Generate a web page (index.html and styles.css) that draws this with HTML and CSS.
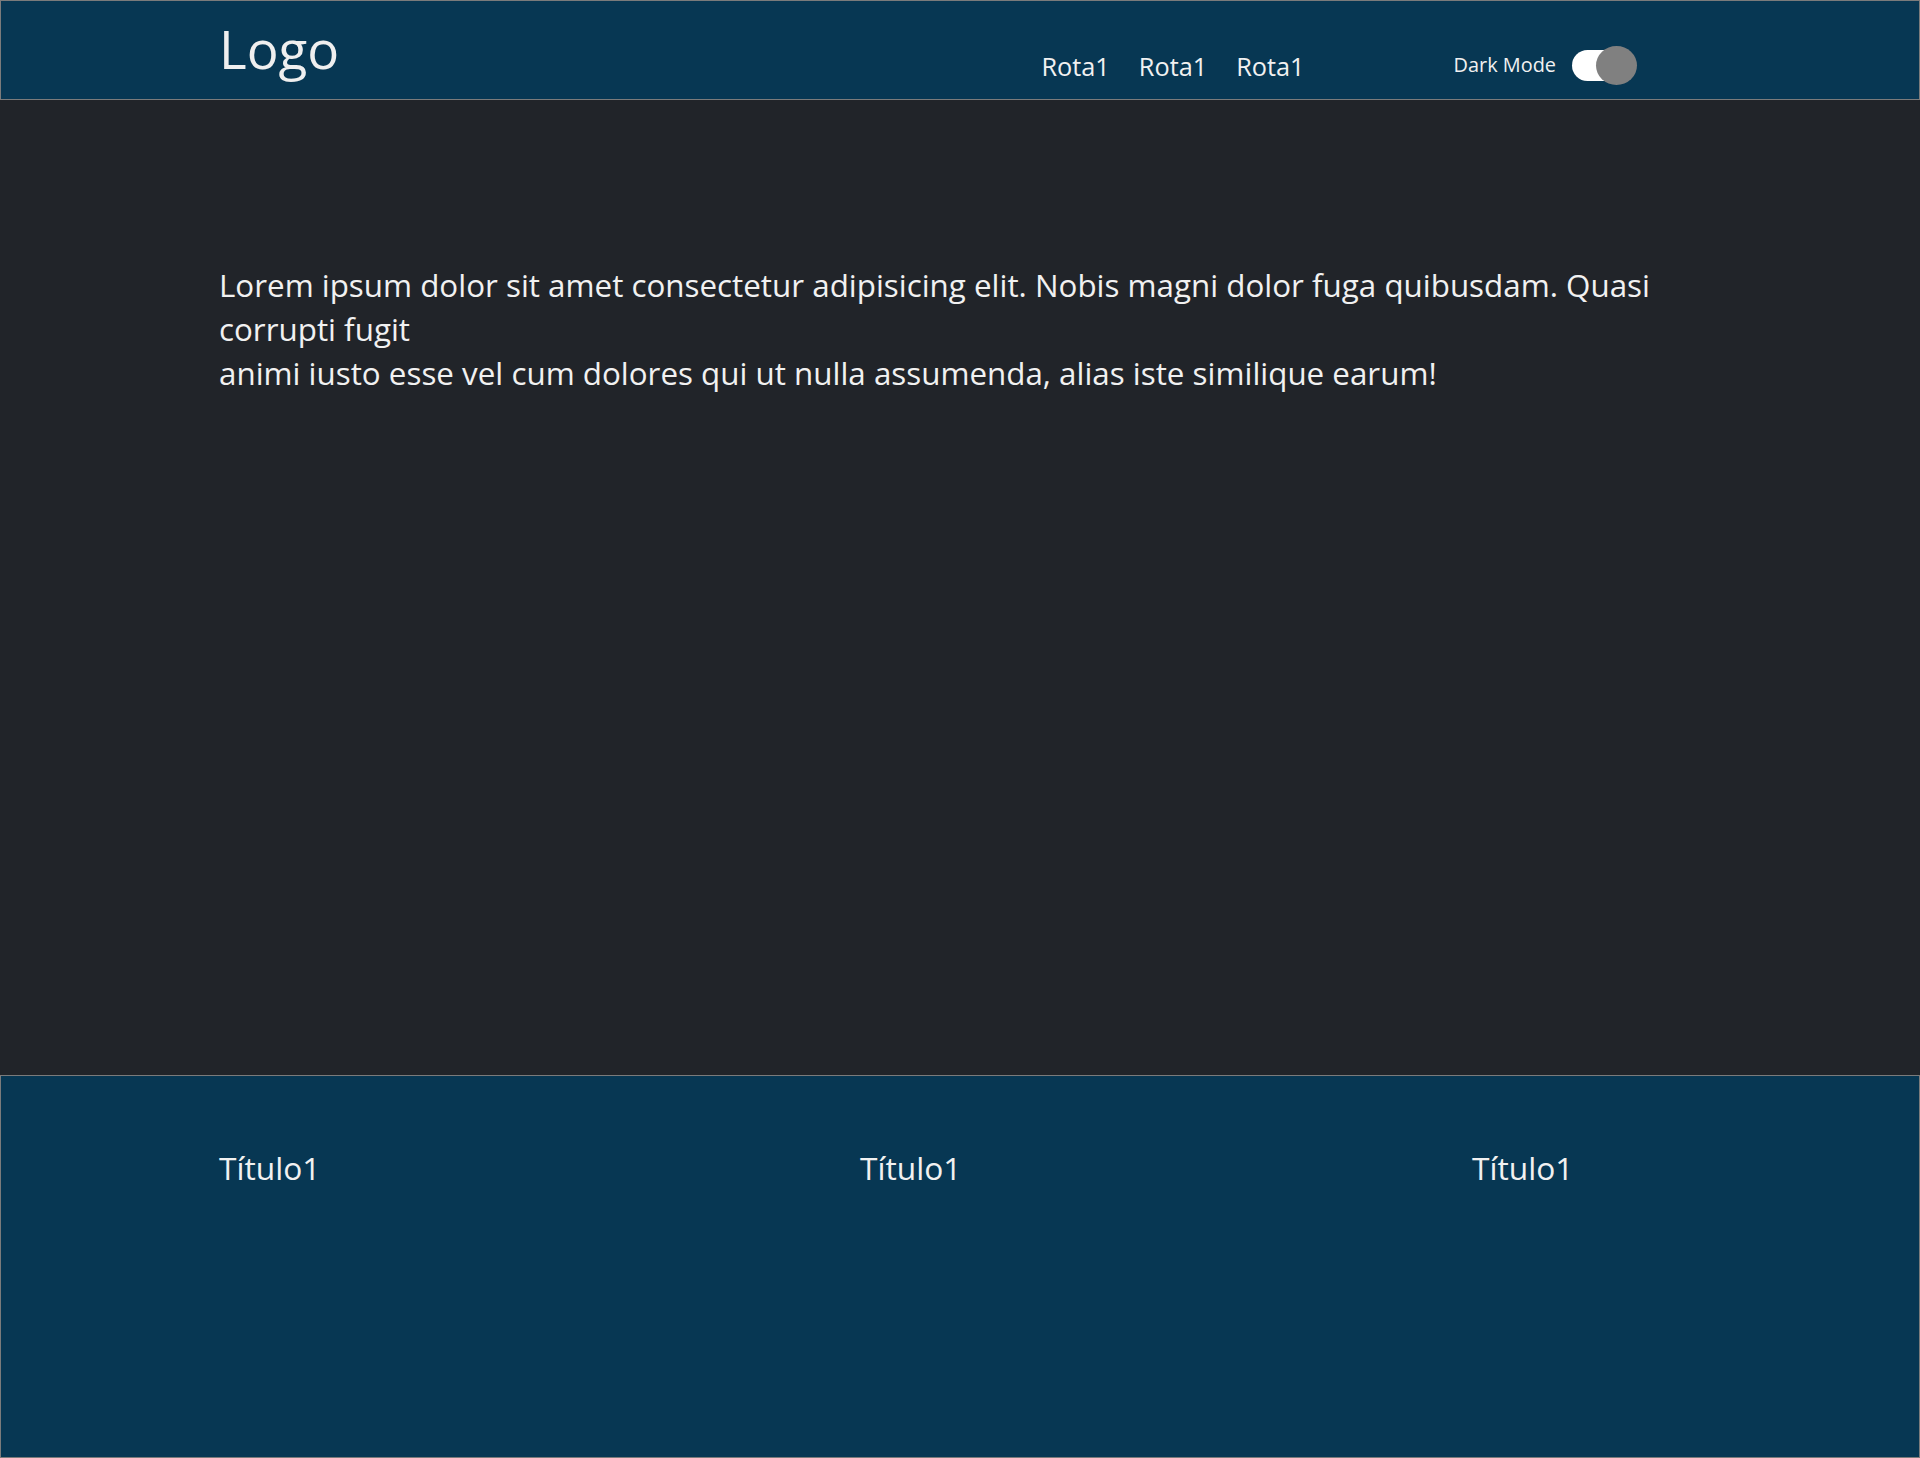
FILE: index.html
```html
<!DOCTYPE html>
<html lang="pt">
<head>
<meta charset="utf-8">
<title>Logo</title>
<link rel="stylesheet" href="styles.css">
</head>
<body>
<header class="site-header">
  <div class="header-inner">
    <div class="logo">Logo</div>
    <nav class="nav">
      <a class="nav-link" href="#">Rota1</a>
      <a class="nav-link" href="#">Rota1</a>
      <a class="nav-link" href="#">Rota1</a>
    </nav>
    <div class="theme">
      <span class="theme-label">Dark Mode</span>
      <span class="switch"><span class="switch-knob"></span></span>
    </div>
  </div>
</header>
<main class="content">
  <p class="lead">Lorem ipsum dolor sit amet consectetur adipisicing elit. Nobis magni dolor fuga quibusdam. Quasi corrupti fugit<br>animi iusto esse vel cum dolores qui ut nulla assumenda, alias iste similique earum!</p>
</main>
<footer class="site-footer">
  <div class="footer-inner">
    <div class="footer-col"><h3 class="footer-title">Título1</h3></div>
    <div class="footer-col"><h3 class="footer-title">Título1</h3></div>
    <div class="footer-col"><h3 class="footer-title">Título1</h3></div>
  </div>
</footer>
</body>
</html>
```
FILE: styles.css
```css
* { box-sizing: border-box; }
html, body { margin: 0; padding: 0; }
body {
  background: #212429;
  color: #f1f1f1;
  font-family: "Open Sans", "Liberation Sans", sans-serif;
  width: 1920px;
  min-height: 1458px;
  display: flex;
  flex-direction: column;
}
.site-header {
  height: 100px;
  background: #073753;
  border: 1px solid #7b7b7b;
}
.header-inner {
  width: 1482px;
  margin: 0 auto;
  padding-right: 64px;
  display: flex;
  align-items: flex-start;
}
.logo {
  font-size: 53px;
  line-height: normal;
  margin-top: 11px;
  color: #efefef;
}
.nav {
  margin-left: auto;
  margin-top: 48px;
  display: flex;
  gap: 29px;
}
.nav-link {
  color: #f1f1f1;
  text-decoration: none;
  font-size: 25.3px;
  line-height: normal;
}
.theme {
  margin-left: 149px;
  margin-top: 45px;
  display: flex;
  align-items: flex-start;
  gap: 16px;
}
.theme-label {
  font-size: 19.9px;
  line-height: normal;
  margin-top: 5px;
}
.switch {
  position: relative;
  width: 65px;
  height: 40px;
  display: block;
}
.switch::before {
  content: "";
  position: absolute;
  left: 0;
  top: 4px;
  width: 58px;
  height: 31px;
  border-radius: 16px;
  background: #ffffff;
}
.switch-knob {
  position: absolute;
  right: 0;
  top: 0;
  width: 41px;
  height: 39px;
  border-radius: 50%;
  background: #808080;
}
.content {
  flex: 1;
  padding-top: 163px;
}
.lead {
  width: 1482px;
  margin: 0 auto;
  font-size: 31.35px;
  line-height: 44px;
}
.site-footer {
  height: 383px;
  background: #073753;
  border: 1px solid #7b7b7b;
}
.footer-inner {
  width: 1482px;
  margin: 0 auto;
  padding-top: 70px;
  display: grid;
  grid-template-columns: 641px 612px 1fr;
}
.footer-title {
  margin: 0;
  font-size: 31.7px;
  font-weight: 400;
  line-height: normal;
}
```
